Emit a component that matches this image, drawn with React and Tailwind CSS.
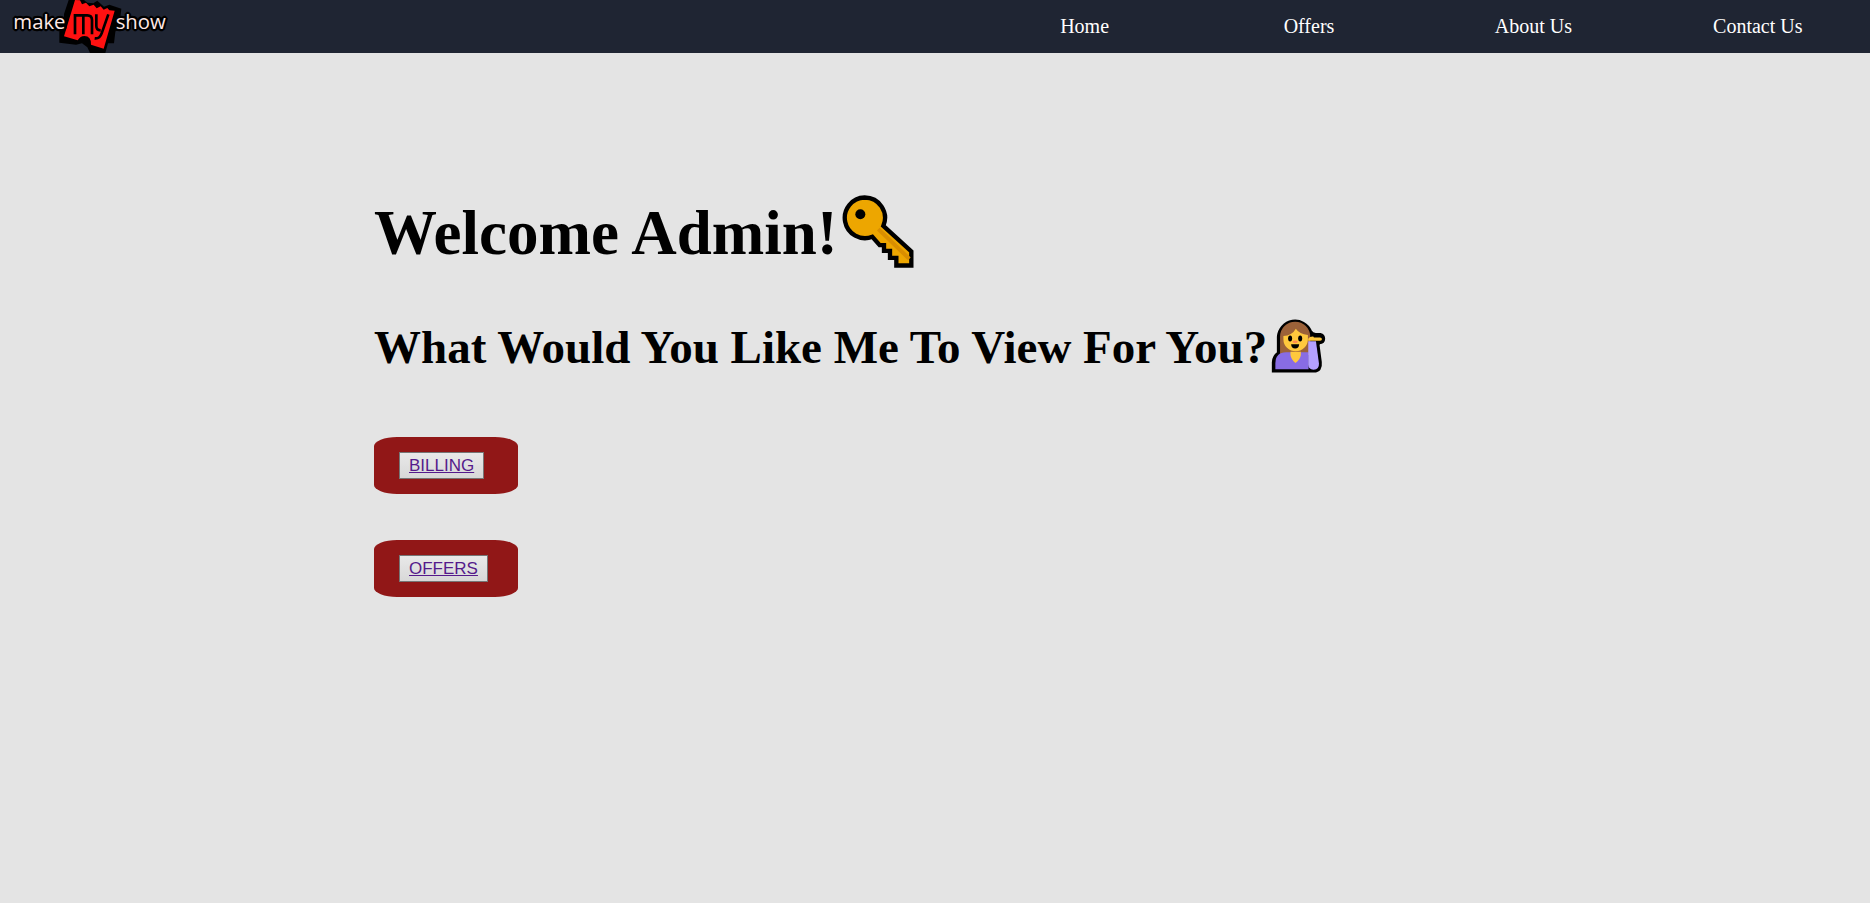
const NAV_LINKS = ['Home', 'Offers', 'About Us', 'Contact Us'];
const ACTIONS = ['BILLING', 'OFFERS'];

function Logo() {
  return (
    <svg viewBox="0 0 600 159" className="h-[53px] w-[200px]" role="img" aria-label="make my show">
      <path
        d="M192 42L206 0H252L262 8L280 10L292 2L312 20L328 14L364 26L360 60L346 96L342 130H324L316 159H270L262 142L246 130L228 134L178 128V94L192 88Z"
        fill="#000"
      />
      <path
        d="M225 0L240 1L246 13L258 8L268 19L281 14L290 25L302 19L311 29L322 24L328 31L344 32L311 146L273 134Q274 108 253 108Q241 108 233 121L192 109Z"
        fill="#ff1111"
      />
      <g fill="none" stroke="#000" strokeWidth="8">
        <path d="M225 103V46H262Q276 46 276 60V103M250 48V103" />
        <path d="M289 43V78Q289 91 302 91M325 43L305 100Q299 117 284 115" />
      </g>
      <g
        fill="#ffe9e6"
        stroke="#000"
        strokeWidth="14"
        strokeLinejoin="bevel"
        paintOrder="stroke"
        fontFamily="'Open Sans', sans-serif"
        fontSize="61"
      >
        <text x="40" y="87">make</text>
        <text x="347" y="87">show</text>
      </g>
    </svg>
  );
}

function KeyIcon() {
  return (
    <svg viewBox="65 45 216 218" className="h-[73px] w-[72px]" aria-hidden="true">
      <path
        d="M133 52A61 61 0 1 0 156 170L178 195H191V212H209V233H228V256H273V214L189 137A61 61 0 0 0 133 52Z"
        fill="#eda600"
        stroke="#000"
        strokeWidth="13"
      />
      <path d="M174 147L267 236" stroke="#d98e00" strokeWidth="12" />
      <circle cx="120" cy="102" r="15" />
    </svg>
  );
}

function PersonIcon() {
  return (
    <svg viewBox="60 40 164 164" className="size-[55px]" aria-hidden="true">
      <path
        d="M67 198V172Q67 155 82 144V96A50 50 0 0 1 178 80Q182 88 193 89H207Q217 91 217 102Q217 113 204 114L200 119L207 172Q210 198 188 198Z"
        fill="#000"
        stroke="#000"
        strokeWidth="9"
      />
      <path d="M87 150V96A45 45 0 0 1 177 96V150Z" fill="#9c6239" />
      <path d="M73 193V174Q74 142 105 142H172V193Z" fill="#886ce4" />
      <path d="M118 141H149V150Q147 164 133 174Q120 164 118 150Z" fill="#ffc83d" />
      <path d="M97 94Q123 92 134 72Q145 88 170 91V103A36 36 0 0 1 97 103Z" fill="#ffc83d" />
      <path d="M171 102Q176 94 186 95L188 98H206Q212 99 212 103Q211 108 205 108H171Z" fill="#ffc83d" />
      <path d="M171 109H194L203 176Q204 194 187 194Q171 194 171 179Z" fill="#b4a0ff" />
      <ellipse cx="117" cy="101" rx="6" ry="9" />
      <ellipse cx="147" cy="101" rx="6" ry="9" />
      <ellipse cx="132" cy="111" rx="8" ry="4" fill="#ff8a50" />
      <path d="M120 118H144Q143 131 132 131Q121 131 120 118Z" />
    </svg>
  );
}

export default function App() {
  return (
    <div className="min-h-screen bg-[#e4e4e4] font-['Liberation_Serif',serif] text-black">
      <header className="flex h-[53px] items-center justify-between bg-[#1f2533]">
        <a href="#home">
          <Logo />
        </a>
        <nav className="grid w-[48%] grid-cols-4 pb-0.5 text-center text-xl text-white">
          {NAV_LINKS.map((label) => (
            <a key={label} href="#">
              {label}
            </a>
          ))}
        </nav>
      </header>
      <main className="flex flex-col items-start pt-[142px] pl-[20%]">
        <h1 className="flex items-start gap-1 text-[63px] leading-[76px] font-bold">
          Welcome Admin!
          <KeyIcon />
        </h1>
        <h2 className="mt-[47px] flex items-start gap-1 text-[47px] leading-[58px] font-bold">
          What Would You Like Me To View For You?
          <PersonIcon />
        </h2>
        <div className="mt-[61px] flex flex-col gap-[46px]">
          {ACTIONS.map((label) => (
            <div key={label} className="flex h-[57px] w-36 items-center rounded-[16%] bg-[#911717] pl-[25px]">
              <button
                type="button"
                className="h-[27px] border border-[#767676] bg-linear-to-b from-[#e9e9e9] to-[#d8d8d8] px-[9px] font-['Liberation_Sans',sans-serif] text-[17px] leading-5 text-[#551a8b] underline"
              >
                {label}
              </button>
            </div>
          ))}
        </div>
      </main>
    </div>
  );
}
